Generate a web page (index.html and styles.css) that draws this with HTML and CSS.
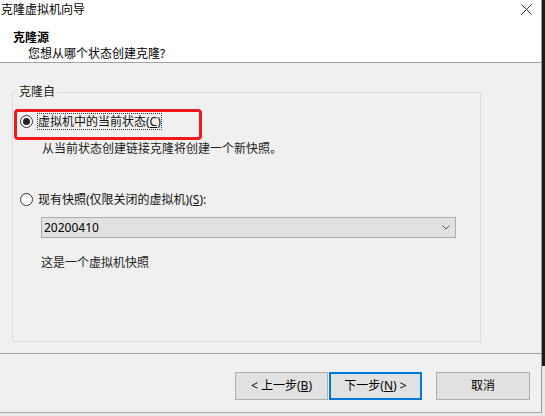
FILE: index.html
```html
<!DOCTYPE html>
<html lang="zh-CN">
<head>
<meta charset="utf-8">
<title>克隆虚拟机向导</title>
<link rel="stylesheet" href="styles.css">
</head>
<body>
<div class="screen">
  <div class="window">
    <div class="titlebar">
      <span class="title">克隆虚拟机向导</span>
      <svg class="close" width="11" height="11" viewBox="0 0 11 11" aria-label="关闭">
        <path d="M0.5 0.5 L10.5 10.5 M10.5 0.5 L0.5 10.5" stroke="#333" stroke-width="1" fill="none"/>
      </svg>
    </div>
    <div class="header">
      <div class="h-title">克隆源</div>
      <div class="h-sub">您想从哪个状态创建克隆?</div>
    </div>
    <div class="body">
      <div class="group">
        <span class="legend">克隆自</span>
        <div class="option">
          <span class="radio checked"></span>
          <span class="label focus">虚拟机中的当前状态(<u>C</u>)</span>
        </div>
        <div class="desc">从当前状态创建链接克隆将创建一个新快照。</div>
        <div class="option option-2">
          <span class="radio"></span>
          <span class="label">现有快照(仅限关闭的虚拟机)(<u>S</u>):</span>
        </div>
        <div class="combo">
          <span class="combo-text">20200410</span>
          <svg class="chevron" width="8" height="5" viewBox="0 0 8 5">
            <path d="M0.5 0.5 L4 4 L7.5 0.5" stroke="#555" stroke-width="1" fill="none"/>
          </svg>
        </div>
        <div class="desc desc-2">这是一个虚拟机快照</div>
      </div>
      <div class="highlight"></div>
    </div>
    <div class="footer">
      <button class="btn btn-back">&lt; 上一步(<u>B</u>)</button>
      <button class="btn btn-next">下一步(<u>N</u>) &gt;</button>
      <button class="btn btn-cancel">取消</button>
    </div>
  </div>
  <div class="edge">
    <div class="edge-dark"></div>
    <div class="edge-light"></div>
  </div>
</div>
</body>
</html>
```

FILE: styles.css
```css
html, body {
  margin: 0;
  padding: 0;
}

body {
  width: 545px;
  height: 416px;
  overflow: hidden;
  background: #e9e9e9;
  font-family: "Noto Sans", "Noto Sans CJK SC", sans-serif;
  font-size: 12px;
  color: #000;
}

.screen {
  display: flex;
  height: 416px;
}

.window {
  width: 542px;
  height: 413px;
  box-sizing: border-box;
  border-right: 1px solid #9c9c9c;
  border-bottom: 1px solid #a8a8a8;
  background: #f0f0f0;
  display: flex;
  flex-direction: column;
}

.edge {
  width: 3px;
  display: flex;
  flex-direction: column;
}

.edge-dark {
  height: 366px;
  background: #1c1c1c;
}

.edge-light {
  flex: 1;
  background: #e9e9e9;
}

.titlebar {
  height: 22px;
  flex: 0 0 22px;
  background: #fff;
  display: flex;
  justify-content: space-between;
  align-items: flex-start;
}

.title {
  line-height: 20px;
  padding-left: 1px;
  color: #000;
}

.close {
  margin: 4px 9px 0 0;
  display: block;
}

.header {
  flex: 0 0 41px;
  box-sizing: border-box;
  background: #fff;
  border-bottom: 1px solid #a0a0a0;
  padding: 8px 0 0 13px;
}

.h-title {
  line-height: 16px;
  font-weight: 700;
}

.h-sub {
  line-height: 16px;
  padding-left: 15px;
}

.body {
  flex: 0 0 290px;
  box-sizing: border-box;
  position: relative;
  padding: 29px 0 0 12px;
}

.group {
  width: 469px;
  height: 250px;
  box-sizing: border-box;
  border: 1px solid #dcdcdc;
  position: relative;
  padding: 20px 0 0 7px;
}

.legend {
  position: absolute;
  top: -7px;
  left: 4px;
  padding: 0 2px;
  line-height: 12px;
  background: #f0f0f0;
  color: #1a1a1a;
}

.option {
  display: flex;
  align-items: center;
  height: 17px;
}

.option-2 {
  margin-top: 34px;
}

.radio {
  width: 13px;
  height: 13px;
  box-sizing: border-box;
  border: 1px solid #333;
  border-radius: 50%;
  background: #fff;
  display: flex;
  align-items: center;
  justify-content: center;
}

.radio.checked::after {
  content: "";
  width: 7px;
  height: 7px;
  border-radius: 50%;
  background: #222;
}

.label {
  margin-left: 4px;
  line-height: 15px;
  border: 1px solid transparent;
  color: #111;
}

.label.focus {
  border: 1px dotted #333;
}

.desc {
  margin: 11px 0 0 22px;
  line-height: 16px;
  color: #222;
}

.desc-2 {
  margin: 17px 0 0 21px;
}

.combo {
  margin: 9px 0 0 21px;
  width: 415px;
  height: 21px;
  box-sizing: border-box;
  border: 1px solid #adadad;
  background: #e1e1e1;
  display: flex;
  align-items: center;
  justify-content: space-between;
  padding: 0 5px 0 2px;
}

.combo-text {
  line-height: 19px;
}

.chevron {
  display: block;
}

.highlight {
  position: absolute;
  top: 46px;
  left: 14px;
  width: 188px;
  height: 31px;
  box-sizing: border-box;
  border: 3px solid #f2191c;
  border-radius: 4px;
}

.footer {
  flex: 0 0 59px;
  box-sizing: border-box;
  border-top: 1px solid #a0a0a0;
  display: flex;
  justify-content: flex-end;
  align-items: flex-start;
  padding: 18px 11px 0 0;
}

.btn {
  height: 28px;
  box-sizing: border-box;
  margin: 0;
  padding: 0;
  border: 1px solid #adadad;
  background: #e1e1e1;
  font-family: "Noto Sans", "Noto Sans CJK SC", sans-serif;
  font-size: 12px;
  color: #000;
  line-height: 26px;
  text-align: center;
}

.btn-back {
  width: 93px;
}

.btn-next {
  width: 93px;
  margin-left: 1px;
  border-color: #0078d7;
  box-shadow: inset 0 0 0 1px #0078d7;
}

.btn-cancel {
  width: 94px;
  margin-left: 14px;
}
```
